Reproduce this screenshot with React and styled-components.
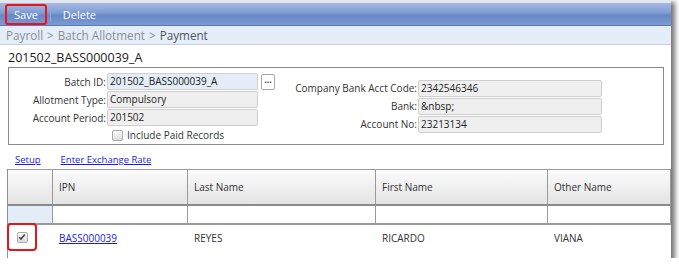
import styled, { createGlobalStyle } from 'styled-components'

const GlobalStyle = createGlobalStyle`
  body {
    margin: 0;
    background: #ffffff;
    font-family: 'Open Sans', 'DejaVu Sans', sans-serif;
  }
`

const Window = styled.div`
  width: 671px;
  height: 258px;
  display: flex;
  flex-direction: column;
  background: #ffffff;
  box-shadow: 3px 3px 5px 1px rgba(0, 0, 0, 0.55);
  overflow: hidden;
`

const Toolbar = styled.div`
  height: 22px;
  display: flex;
  align-items: center;
  padding-left: 5px;
  border-top: 3px solid #e3e6ec;
  border-bottom: 1px solid #5a79b6;
  background: linear-gradient(#a6bbe2, #7e9cd3 45%, #6788c8 55%, #7b99d2);
`

const ToolButton = styled.button`
  height: 21px;
  padding: 0 ${(p) => (p.$marked ? '7px' : '8px')};
  border: 2px solid ${(p) => (p.$marked ? '#e8141b' : 'transparent')};
  border-radius: 3px;
  background: transparent;
  color: #ffffff;
  font-family: inherit;
  font-size: 11px;
  cursor: pointer;
`

const ToolSep = styled.span`
  width: 1px;
  height: 15px;
  margin: 0 2px 0 3px;
  background: #8ea8d8;
`

const Breadcrumb = styled.div`
  height: 18px;
  display: flex;
  align-items: center;
  padding-left: 6px;
  background: #e4edf8;
  border-bottom: 1px solid #c9ced6;
  color: #8a8f96;
  font-size: 11.7px;
  gap: 4px;
`

const Current = styled.span`
  color: #4f5660;
`

const Title = styled.div`
  padding: 4px 0 0 8px;
  height: 15px;
  font-size: 12.5px;
  color: #1b1b1b;
`

const FormBox = styled.div`
  margin: 3px 0 0 8px;
  width: 654px;
  height: 76px;
  border: 1px solid #8a8a8a;
  display: flex;
`

const LeftCol = styled.div`
  width: 280px;
  padding-top: 5px;
  display: flex;
  flex-direction: column;
  gap: 1px;
`

const RightCol = styled.div`
  flex: 1;
  display: flex;
  flex-direction: column;
  justify-content: center;
  gap: 1px;
`

const FieldRow = styled.div`
  display: flex;
  align-items: center;
  height: 17px;
`

const Label = styled.label`
  width: ${(p) => p.$w}px;
  text-align: right;
  font-size: 10px;
  color: #333;
  padding-right: 1px;
  box-sizing: border-box;
  white-space: nowrap;
`

const Input = styled.div`
  width: ${(p) => p.$w}px;
  height: 17px;
  box-sizing: border-box;
  border: 1px solid #cfcfcf;
  border-radius: 2px;
  background: ${(p) => (p.$active ? '#e4edf8' : '#efefef')};
  font-size: 10px;
  line-height: 15px;
  padding-left: 2px;
  color: #222;
`

const DotsButton = styled.div`
  margin-left: 3px;
  width: 14px;
  height: 16px;
  box-sizing: border-box;
  border: 1px solid #a9a9a9;
  border-radius: 2px;
  background: #fff;
  font-size: 9px;
  line-height: 9px;
  text-align: center;
  color: #333;
  font-weight: bold;
`

const CheckRow = styled.div`
  display: flex;
  align-items: center;
  gap: 4px;
  padding-left: 103px;
  height: 16px;
  font-size: 10px;
  color: #333;
`

const Box = styled.span`
  width: 9px;
  height: 9px;
  border: 1px solid #aaa;
  border-radius: 2px;
  background: linear-gradient(#fafafa, #dcdcdc);
  display: inline-flex;
  align-items: center;
  justify-content: center;
`

const Links = styled.div`
  display: flex;
  gap: 20px;
  padding: 8px 0 0 15px;
  height: 16px;
  font-size: 9.5px;
`

const Link = styled.a`
  color: #1a1ae6;
  text-decoration: underline;
`

const Grid = styled.div`
  margin-left: 7px;
  flex: 1;
  border-left: 1px solid #8f8f8f;
  display: grid;
  grid-template-columns: 45px 135px 188px 172px 1fr;
  grid-template-rows: 37px 19px 26px;
  align-content: start;
  font-size: 10px;
  color: #333;
`

const HeadCell = styled.div`
  display: flex;
  align-items: center;
  padding-left: 6px;
  background: linear-gradient(#fbfbfb, #e4e4e4);
  border-top: 1px solid #9a9a9a;
  border-right: 1px solid #9a9a9a;
  border-bottom: 2px solid #8a8a8a;
`

const FilterCell = styled.div`
  background: ${(p) => (p.$blue ? '#e3edf8' : '#fff')};
  border-right: 1px solid #9a9a9a;
  border-bottom: 2px solid #9a9a9a;
`

const Cell = styled.div`
  display: flex;
  align-items: ${(p) => (p.$check ? 'flex-start' : 'center')};
  padding-left: ${(p) => (p.$check ? '0' : '6px')};
`

const Marked = styled.div`
  width: 30px;
  height: 28px;
  margin: -2px 0 0 -1px;
  box-sizing: border-box;
  border: 2px solid #e8141b;
  border-radius: 4px;
  display: flex;
  align-items: center;
  justify-content: center;
`

const Tick = () => (
  <Box>
    <svg width="8" height="8" viewBox="0 0 8 8">
      <path d="M1.2 4.2 L3 6 L6.8 1.6" stroke="#444" strokeWidth="1.6" fill="none" />
    </svg>
  </Box>
)

export default function App() {
  return (
    <>
      <GlobalStyle />
      <Window>
        <Toolbar>
          <ToolButton $marked>Save</ToolButton>
          <ToolSep />
          <ToolButton>Delete</ToolButton>
        </Toolbar>
        <Breadcrumb>
          <span>Payroll</span>
          <span>&gt;</span>
          <span>Batch Allotment</span>
          <span>&gt;</span>
          <Current>Payment</Current>
        </Breadcrumb>
        <Title>201502_BASS000039_A</Title>
        <FormBox>
          <LeftCol>
            <FieldRow>
              <Label $w={98}>Batch ID:</Label>
              <Input $w={151} $active>201502_BASS000039_A</Input>
              <DotsButton>...</DotsButton>
            </FieldRow>
            <FieldRow>
              <Label $w={98}>Allotment Type:</Label>
              <Input $w={151}>Compulsory</Input>
            </FieldRow>
            <FieldRow>
              <Label $w={98}>Account Period:</Label>
              <Input $w={151}>201502</Input>
            </FieldRow>
            <CheckRow>
              <Box />
              <span>Include Paid Records</span>
            </CheckRow>
          </LeftCol>
          <RightCol>
            <FieldRow>
              <Label $w={129}>Company Bank Acct Code:</Label>
              <Input $w={184}>2342546346</Input>
            </FieldRow>
            <FieldRow>
              <Label $w={129}>Bank:</Label>
              <Input $w={184}>&amp;nbsp;</Input>
            </FieldRow>
            <FieldRow>
              <Label $w={129}>Account No:</Label>
              <Input $w={184}>23213134</Input>
            </FieldRow>
          </RightCol>
        </FormBox>
        <Links>
          <Link href="#">Setup</Link>
          <Link href="#">Enter Exchange Rate</Link>
        </Links>
        <Grid>
          <HeadCell />
          <HeadCell>IPN</HeadCell>
          <HeadCell>Last Name</HeadCell>
          <HeadCell>First Name</HeadCell>
          <HeadCell>Other Name</HeadCell>
          <FilterCell $blue />
          <FilterCell />
          <FilterCell />
          <FilterCell />
          <FilterCell />
          <Cell $check>
            <Marked>
              <Tick />
            </Marked>
          </Cell>
          <Cell>
            <Link href="#">BASS000039</Link>
          </Cell>
          <Cell>REYES</Cell>
          <Cell>RICARDO</Cell>
          <Cell>VIANA</Cell>
        </Grid>
      </Window>
    </>
  )
}
